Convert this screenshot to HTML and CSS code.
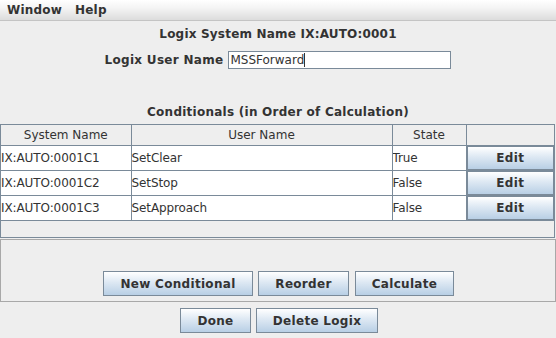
FILE: index.html
```html
<!DOCTYPE html>
<html>
<head>
<meta charset="utf-8">
<link rel="stylesheet" href="styles.css">
</head>
<body>
<div class="window">
  <div class="menubar">
    <span class="menu">Window</span>
    <span class="menu">Help</span>
  </div>
  <div class="title-row">Logix System Name IX:AUTO:0001</div>
  <div class="user-row">
    <span class="label">Logix User Name</span>
    <div class="input"><span>MSSForward</span><span class="caret"></span></div>
  </div>
  <div class="cond-title">Conditionals (in Order of Calculation)</div>
  <div class="scroll">
    <table class="grid">
      <colgroup>
        <col class="c1"><col class="c2"><col class="c3"><col class="c4">
      </colgroup>
      <thead>
        <tr><th>System Name</th><th>User Name</th><th>State</th><th></th></tr>
      </thead>
      <tbody>
        <tr><td>IX:AUTO:0001C1</td><td>SetClear</td><td>True</td><td class="btn-cell"><button class="edit">Edit</button></td></tr>
        <tr><td>IX:AUTO:0001C2</td><td>SetStop</td><td>False</td><td class="btn-cell"><button class="edit">Edit</button></td></tr>
        <tr><td>IX:AUTO:0001C3</td><td>SetApproach</td><td>False</td><td class="btn-cell"><button class="edit">Edit</button></td></tr>
      </tbody>
    </table>
  </div>
  <div class="panel">
    <button class="btn w-new">New Conditional</button>
    <button class="btn w-reorder">Reorder</button>
    <button class="btn w-calc">Calculate</button>
  </div>
  <div class="bottom-row">
    <button class="btn w-done">Done</button>
    <button class="btn w-delete">Delete Logix</button>
  </div>
</div>
</body>
</html>
```

FILE: styles.css
```css
* { box-sizing: border-box; }
html, body {
  margin: 0;
  padding: 0;
  background: #eeeeee;
}
body {
  width: 556px;
  height: 338px;
  overflow: hidden;
  font-family: "DejaVu Sans", sans-serif;
  font-size: 12px;
  color: #333333;
}
.window {
  display: flex;
  flex-direction: column;
  width: 556px;
  height: 338px;
}
.menubar {
  height: 21px;
  display: flex;
  align-items: center;
  padding-left: 7px;
  gap: 13px;
  background: linear-gradient(#ffffff, #f4f4f4 40%, #dcdcdc);
  border-bottom: 1px solid #c4c4c4;
}
.menu {
  font-weight: bold;
  color: #333;
  letter-spacing: 0.2px;
}
.title-row {
  height: 25px;
  display: flex;
  align-items: center;
  justify-content: center;
  font-weight: bold;
  letter-spacing: 0.2px;
  padding-top: 1px;
}
.user-row {
  height: 28px;
  display: flex;
  align-items: center;
  justify-content: center;
  gap: 5px;
}
.label { font-weight: bold; letter-spacing: 0.3px; }
.input {
  width: 223px;
  height: 18px;
  background: #fff;
  border: 1px solid #7a8a99;
  display: flex;
  align-items: center;
  padding-left: 1px;
  color: #333;
}
.caret {
  display: inline-block;
  width: 1px;
  height: 14px;
  background: #333;
}
.cond-title {
  margin-top: 26px;
  height: 24px;
  display: flex;
  align-items: center;
  justify-content: center;
  font-weight: bold;
  letter-spacing: 0.25px;
}
.scroll {
  width: 555px;
  height: 114px;
  border: 1px solid #7a8a99;
  background: #eeeeee;
}
.grid {
  border-collapse: collapse;
  table-layout: fixed;
  width: 553px;
}
.c1 { width: 130px; }
.c2 { width: 261px; }
.c3 { width: 74px; }
.c4 { width: 88px; }
.grid th {
  height: 20px;
  font-weight: normal;
  background: #eeeeee;
  border-left: 1px solid #7a8a99;
  border-bottom: 1px solid #7a8a99;
  padding: 0;
  text-align: center;
}
.grid th:first-child, .grid td:first-child { border-left: none; }
.grid td {
  height: 25px;
  background: #fff;
  border-left: 1px solid #7a8a99;
  border-bottom: 1px solid #7a8a99;
  padding: 0;
  white-space: nowrap;
  overflow: hidden;
  letter-spacing: -0.1px;
}
.grid td.btn-cell { padding: 0; letter-spacing: 0; }
.edit {
  display: block;
  width: 100%;
  height: 24px;
  margin: 0;
  font-family: "DejaVu Sans", sans-serif;
  font-size: 12px;
  font-weight: bold;
  letter-spacing: 0.3px;
  color: #333;
  border: 1px solid #7a8a99;
  background: linear-gradient(#ffffff, #dde8f3 45%, #b8cfe5);
}
.panel {
  margin-top: 1px;
  width: 556px;
  height: 63px;
  border: 1px solid #a8a8a8;
  display: flex;
  align-items: flex-end;
  justify-content: center;
  gap: 5px;
  padding-bottom: 5px;
  padding-left: 1px;
}
.btn {
  height: 25px;
  margin: 0;
  padding: 0;
  font-family: "DejaVu Sans", sans-serif;
  font-size: 12px;
  font-weight: bold;
  letter-spacing: 0.3px;
  color: #333;
  border: 1px solid #7a8a99;
  background: linear-gradient(#ffffff, #dde8f3 45%, #b8cfe5);
}
.w-new { width: 150px; }
.w-reorder { width: 91px; }
.w-calc { width: 99px; margin-left: 1px; }
.w-done { width: 71px; }
.w-delete { width: 122px; }
.bottom-row {
  height: 36px;
  display: flex;
  align-items: flex-start;
  justify-content: center;
  gap: 5px;
  padding-top: 6px;
  padding-left: 2px;
}
```
